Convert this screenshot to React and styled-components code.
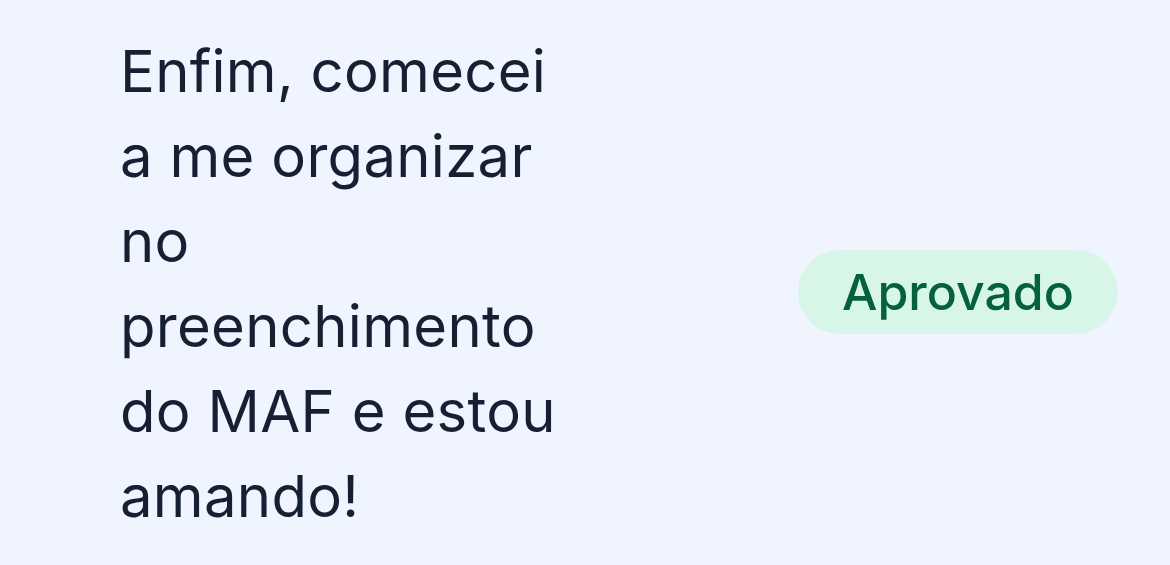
import React from 'react';
import styled, { createGlobalStyle } from 'styled-components';

const GlobalStyle = createGlobalStyle`
   html, body {
      margin: 0;
      padding: 0;
      background: #eff4ff;
   }
   body {
      font-family: Inter, "Noto Sans", "Liberation Sans", sans-serif;
      -webkit-font-smoothing: antialiased;
   }
`;

const statusColors = {
   approved: { bg: '#d7f6e8', fg: '#05603f' },
};

export default function App() {
   return (
      <>
         <GlobalStyle />
         <Table>
            <tbody>
               <Row>
                  <CommentCell>
                     Enfim, comecei a me organizar no preenchimento do MAF e estou amando!
                  </CommentCell>
                  <StatusCell>
                     <Badge $status="approved">Aprovado</Badge>
                  </StatusCell>
               </Row>
            </tbody>
         </Table>
      </>
   );
}

const Table = styled.table`
   border-collapse: collapse;
   width: 1170px;
   height: 565px;
`;

const Row = styled.tr`
   vertical-align: middle;
`;

const CommentCell = styled.td`
   width: 470px;
   padding: 2px 0 0 120px;
   box-sizing: content-box;
   font-size: 58px;
   line-height: 85px;
   letter-spacing: 0.3px;
   color: #172033;
   font-weight: 400;
`;

const StatusCell = styled.td`
   padding: 18px 0 0 208px;
   vertical-align: middle;
`;

const Badge = styled.span`
   display: inline-flex;
   align-items: center;
   justify-content: center;
   height: 84px;
   padding: 0 44px;
   border-radius: 999px;
   font-size: 50px;
   font-weight: 500;
   color: ${(p) => statusColors[p.$status].fg};
   background: ${(p) => statusColors[p.$status].bg};
`;
